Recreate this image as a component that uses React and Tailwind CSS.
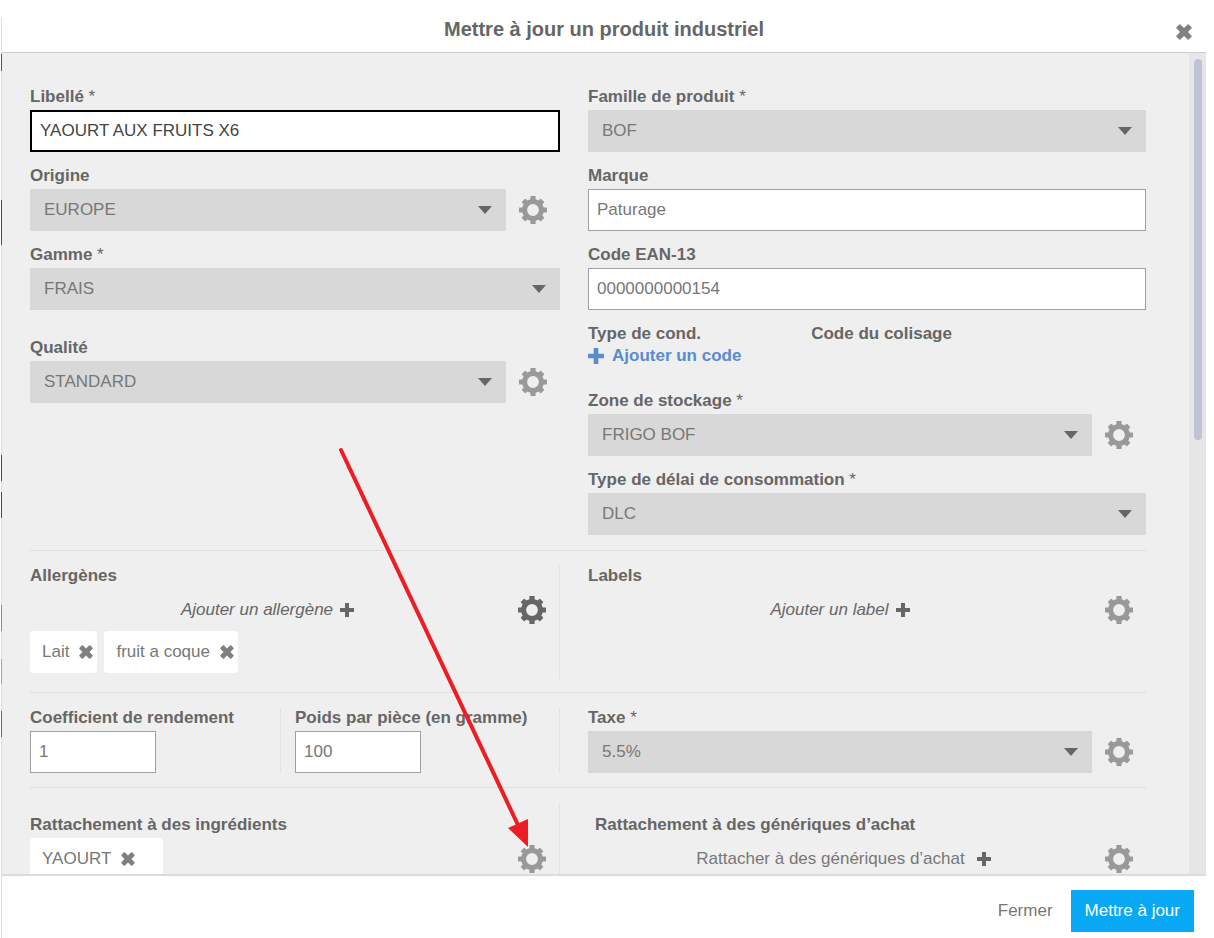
import { useState } from "react";
import clsx from "clsx";

const TEETH = [0, 90, 180, 270];
const CORNER_TEETH = [45, 135, 225, 315];

function GearIcon() {
  return (
    <svg viewBox="0 0 28 28" className="size-7" fill="currentColor" aria-hidden="true">
      <circle cx="14" cy="14" r="8.4" fill="none" stroke="currentColor" strokeWidth="5" />
      {TEETH.map((a) => (
        <path key={a} d="M11.4 4.5V.5q0-.5.5-.5h4.2q.5 0 .5.5v4z" transform={`rotate(${a} 14 14)`} />
      ))}
      {CORNER_TEETH.map((a) => (
        <path key={a} d="M11.3 5V1.2q0-.8.8-.8h3.8q.8 0 .8.8V5z" transform={`rotate(${a} 14 14)`} />
      ))}
    </svg>
  );
}

function CrossIcon({ className }) {
  return (
    <svg viewBox="0 0 16 16" className={className} fill="currentColor" aria-hidden="true">
      <path d="M3.3.4q.5-.4 1 0L8 4 11.7.4q.5-.4 1 0l2.9 2.9q.4.5 0 1L12 8l3.6 3.7q.4.5 0 1l-2.9 2.9q-.5.4-1 0L8 12l-3.7 3.6q-.5.4-1 0L.4 12.7q-.4-.5 0-1L4 8 .4 4.3q-.4-.5 0-1z" />
    </svg>
  );
}

function PlusIcon({ className }) {
  return (
    <svg viewBox="0 0 14 14" className={className} fill="currentColor" aria-hidden="true">
      <path d="M5 0h4v5h5v4H9v5H5V9H0V5h5z" />
    </svg>
  );
}

function Label({ htmlFor, required, children }) {
  const Tag = htmlFor ? "label" : "p";
  return (
    <Tag htmlFor={htmlFor} className="block mb-1 text-[17px] leading-[19px] font-bold whitespace-nowrap">
      {children}
      {required && <span className="font-normal"> *</span>}
    </Tag>
  );
}

function GearButton({ label, dark }) {
  return (
    <button
      type="button"
      aria-label={label}
      className={clsx("w-[54px] h-[42px] shrink-0 flex items-center justify-center", dark ? "text-[#666]" : "text-[#999]")}
    >
      <GearIcon />
    </button>
  );
}

function SelectField({ id, label, value, required, gear }) {
  return (
    <div>
      <Label htmlFor={id} required={required}>{label}</Label>
      <div className="flex">
        <div className="relative flex-1">
          <select id={id} className="w-full h-[42px] px-3.5 appearance-none bg-[#d8d8d8] text-[#777] text-[17px]">
            <option>{value}</option>
          </select>
          <svg viewBox="0 0 14 8" className="absolute right-3.5 top-[17px] w-3.5 h-2 pointer-events-none" fill="#666">
            <path d="M0 0h14L7 8z" />
          </svg>
        </div>
        {gear && <GearButton label={`Gérer : ${label}`} />}
      </div>
    </div>
  );
}

function TextField({ id, label, value, required, active, small }) {
  const [text, setText] = useState(value);
  return (
    <div>
      <Label htmlFor={id} required={required}>{label}</Label>
      <input
        id={id}
        type="text"
        value={text}
        onChange={(e) => setText(e.target.value)}
        className={clsx(
          "h-[42px] px-2 bg-white text-[17px] block outline-none",
          active ? "border-2 border-black text-[#444]" : "border border-[#a0a0a0] text-[#777]",
          small ? "w-[126px]" : "w-full"
        )}
      />
    </div>
  );
}

function Chip({ children, wide }) {
  return (
    <span className={clsx("h-[42px] pl-3 flex items-center gap-2.5 bg-white rounded text-[#777]", wide ? "pr-7" : "pr-1")}>
      {children}
      <button type="button" aria-label={`Retirer ${children}`} className="text-[#808080]">
        <CrossIcon className="size-3.5" />
      </button>
    </span>
  );
}

function AddRow({ children, italic, gear, dark }) {
  return (
    <div className="flex">
      <button
        type="button"
        className={clsx("flex-1 h-[42px] flex items-center justify-center", italic ? "italic gap-[7px] text-[#666]" : "gap-3 text-[#777]")}
      >
        {children}
        <PlusIcon className="size-3.5 text-[#666]" />
      </button>
      <GearButton label={gear} dark={dark} />
    </div>
  );
}

// tranche de la page visible derrière la fenêtre
function PageEdge() {
  return (
    <div className="w-0.5 shrink-0 pl-px pt-[17px] flex flex-col" aria-hidden="true">
      <div className="h-[37px] bg-[#ddd]" />
      <div className="h-[17px] bg-[#555]" />
      <div className="h-[129px] bg-[#ddd]" />
      <div className="h-[45px] bg-[#145a96]" />
      <div className="h-[210px] bg-[#ddd]" />
      <div className="h-[26px] bg-[#145a96]" />
      <div className="h-[11px] bg-[#ddd]" />
      <div className="h-[26px] bg-[#145a96]" />
      <div className="h-[87px] bg-[#ddd]" />
      <div className="h-[26px] bg-[#4fa79b]" />
      <div className="h-[28px] bg-[#ddd]" />
      <div className="h-[25px] bg-[#b5ab4c]" />
      <div className="h-[27px] bg-[#ddd]" />
      <div className="h-[26px] bg-[#3f6fc0]" />
      <div className="flex-1 bg-[#ddd]" />
    </div>
  );
}

export default function App() {
  return (
    <div className="relative h-screen flex bg-white overflow-hidden font-['Liberation_Sans',Arial,sans-serif] text-[17px] text-[#666]">
      <PageEdge />

      <div role="dialog" aria-labelledby="titre" className="flex-1 min-w-0 mr-2 flex flex-col">
        {/* En-tête */}
        <header className="relative h-[53px] shrink-0 flex items-center justify-center pt-1.5 border-b border-[#ccc]">
          <h1 id="titre" className="text-[20px] font-bold">Mettre à jour un produit industriel</h1>
          <button type="button" aria-label="Fermer la fenêtre" className="absolute right-3.5 top-6 text-[#808080]">
            <CrossIcon className="size-4" />
          </button>
        </header>

        {/* Formulaire */}
        <div className="flex-1 min-h-0 flex">
          <form className="flex-1 min-w-0 overflow-hidden bg-[#efefef] pt-[34px] pl-7 pr-[43px]">
            <section className="grid grid-cols-2 pb-[15px]">
              <div className="mr-7 flex flex-col gap-3.5">
                <TextField id="libelle" label="Libellé" value="YAOURT AUX FRUITS X6" required active />
                <SelectField id="origine" label="Origine" value="EUROPE" gear />
                <SelectField id="gamme" label="Gamme" value="FRAIS" required />
                <div className="pt-3.5">
                  <SelectField id="qualite" label="Qualité" value="STANDARD" gear />
                </div>
              </div>
              <div className="flex flex-col gap-3.5">
                <SelectField id="famille" label="Famille de produit" value="BOF" required />
                <TextField id="marque" label="Marque" value="Paturage" />
                <TextField id="ean" label="Code EAN-13" value="0000000000154" />
                <div className="pb-3">
                  <div className="grid grid-cols-5">
                    <div className="col-span-2"><Label>Type de cond.</Label></div>
                    <div className="col-span-3"><Label>Code du colisage</Label></div>
                  </div>
                  <button type="button" className="h-[18px] flex items-center gap-2 font-bold text-[#5b8bcf]">
                    <PlusIcon className="size-4" />
                    Ajouter un code
                  </button>
                </div>
                <SelectField id="zone" label="Zone de stockage" value="FRIGO BOF" required gear />
                <SelectField id="delai" label="Type de délai de consommation" value="DLC" required />
              </div>
            </section>

            <section className="grid grid-cols-2 pt-[15px] pb-[13px] border-t border-[#dfdfdf]">
              <div className="mr-7 pb-1.5 border-r border-[#e2e2e2]">
                <Label>Allergènes</Label>
                <AddRow italic dark gear="Gérer les allergènes">Ajouter un allergène</AddRow>
                <div className="flex gap-[7px]">
                  <Chip>Lait</Chip>
                  <Chip>fruit a coque</Chip>
                </div>
              </div>
              <div>
                <Label>Labels</Label>
                <AddRow italic gear="Gérer les labels">Ajouter un label</AddRow>
              </div>
            </section>

            <section className="grid grid-cols-2 pt-[15px] pb-3.5 border-t border-[#dfdfdf]">
              <div className="mr-7 grid grid-cols-2">
                <div className="mr-3.5 border-r border-[#e2e2e2]">
                  <TextField id="coef" label="Coefficient de rendement" value="1" small />
                </div>
                <div className="border-r border-[#e2e2e2]">
                  <TextField id="poids" label="Poids par pièce (en gramme)" value="100" small />
                </div>
              </div>
              <SelectField id="taxe" label="Taxe" value="5.5%" required gear />
            </section>

            <section className="grid grid-cols-2 pt-[15px] border-t border-[#dfdfdf]">
              <div className="mr-7 pt-3 pb-8 border-r border-[#e2e2e2]">
                <Label>Rattachement à des ingrédients</Label>
                <div className="flex justify-between">
                  <Chip wide>YAOURT</Chip>
                  <GearButton label="Gérer les ingrédients" />
                </div>
              </div>
              <div className="pt-3 pl-[7px]">
                <Label>Rattachement à des génériques d’achat</Label>
                <AddRow gear="Gérer les génériques d’achat">Rattacher à des génériques d’achat</AddRow>
              </div>
            </section>
          </form>

          {/* Barre de défilement */}
          <div className="w-[17px] shrink-0 pt-1.5 bg-[#e6e6e6] flex justify-center" aria-hidden="true">
            <div className="w-2 h-[381px] rounded-full bg-[#c0c2d8]" />
          </div>
        </div>

        {/* Pied */}
        <footer className="h-[64px] shrink-0 flex items-start justify-end gap-[18px] pt-3.5 pr-3 border-t-2 border-[#dcdcdc]">
          <button type="button" className="h-[42px] text-[#777]">Fermer</button>
          <button type="button" className="h-[42px] px-3.5 bg-[#08a8f4] text-white">Mettre à jour</button>
        </footer>
      </div>

      {/* Flèche d'aide vers le réglage des ingrédients */}
      <svg width="188" height="398" viewBox="0 0 188 398" className="absolute left-[340px] top-[449px] overflow-visible pointer-events-none" aria-hidden="true">
        <path d="M1 1 178 376" stroke="#ee1c24" strokeWidth="4" strokeLinecap="round" />
        <path d="M188 398 168 379 188 370z" fill="#ee1c24" />
      </svg>
    </div>
  );
}
